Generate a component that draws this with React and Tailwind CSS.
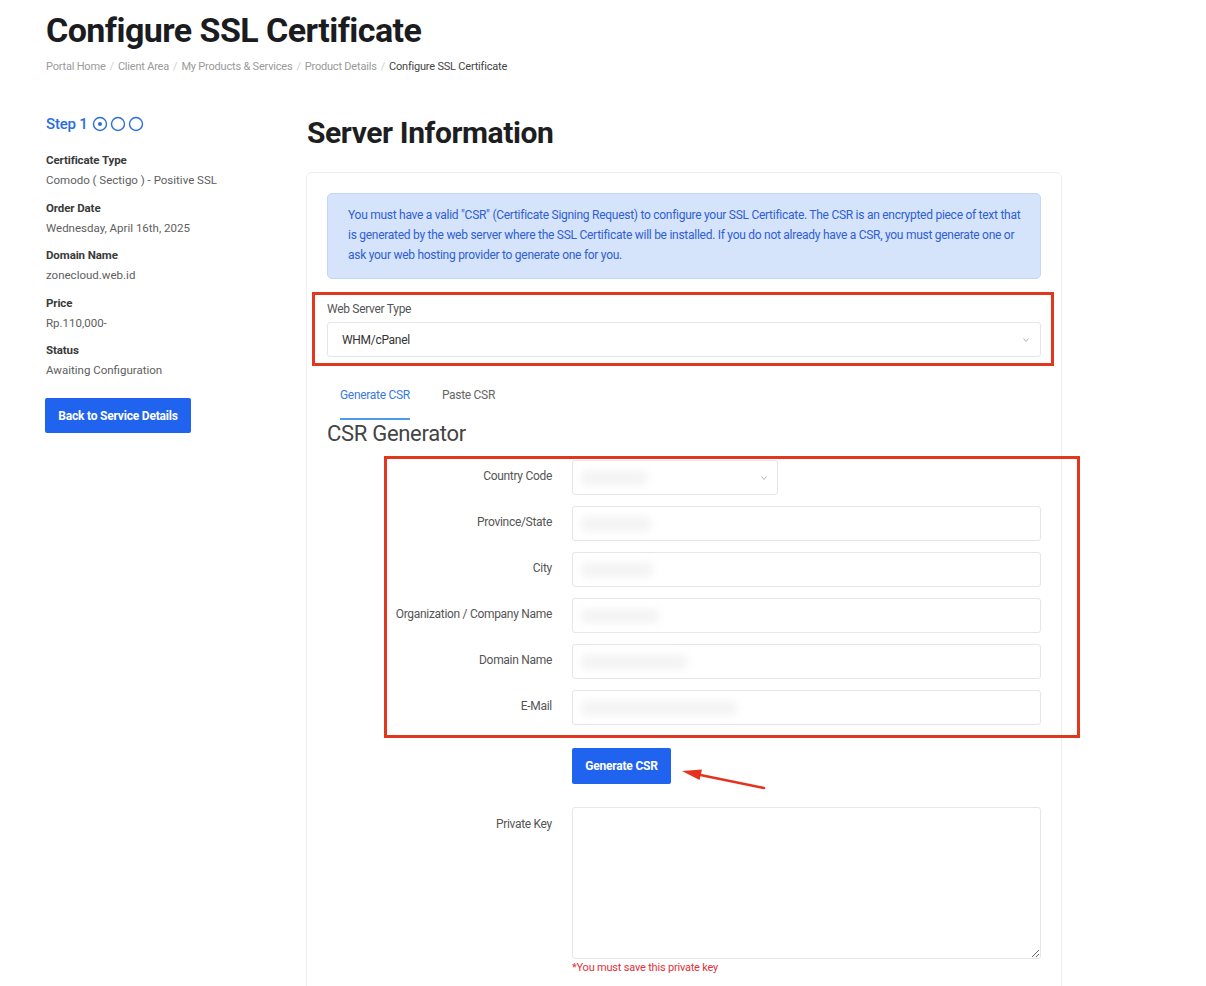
import React from "react";

const F = { fontFamily: "Roboto, 'Liberation Sans', Arial, sans-serif" };

function Blob({ w }) {
  return <div className="h-[14px] rounded bg-[#f0f0f0] blur-[4px] opacity-80" style={{ width: w }} />;
}

function Caret() {
  return (
    <svg width="6" height="4" viewBox="0 0 6 4" className="shrink-0">
      <path d="M0.5 0.5 L3 3.5 L5.5 0.5" fill="none" stroke="#b5b5b5" strokeWidth="1" />
    </svg>
  );
}

function Row({ label, children }) {
  return (
    <div className="flex items-center">
      <div className="w-[165px] text-right text-[12px] leading-[16px] tracking-[-0.3px] text-[#555] pb-[3px]">{label}</div>
      <div className="ml-[20px]">{children}</div>
    </div>
  );
}

function Input({ blob }) {
  return (
    <div className="w-[469px] h-[35px] border border-[#e3e6ea] rounded-[3px] bg-white flex items-center pl-[8px]">
      <Blob w={blob} />
    </div>
  );
}

export default function App() {
  const groups = [
    ["Certificate Type", "Comodo ( Sectigo ) - Positive SSL"],
    ["Order Date", "Wednesday, April 16th, 2025"],
    ["Domain Name", "zonecloud.web.id"],
    ["Price", "Rp.110,000-"],
    ["Status", "Awaiting Configuration"],
  ];
  return (
    <div className="min-h-screen bg-white text-[#333] pl-[46px] pt-[10px] overflow-hidden" style={F}>
      <h1 className="text-[34px] leading-[40px] font-bold text-[#1b1c1f] tracking-[-0.55px]">Configure SSL Certificate</h1>
      <div className="mt-[9px] text-[11px] leading-[16px] text-[#9a9a9a] tracking-[-0.2px] flex gap-[4px]">
        <span>Portal Home</span><span className="text-[#d0d0d0]">/</span>
        <span>Client Area</span><span className="text-[#d0d0d0]">/</span>
        <span>My Products &amp; Services</span><span className="text-[#d0d0d0]">/</span>
        <span>Product Details</span><span className="text-[#d0d0d0]">/</span>
        <span className="text-[#444]">Configure SSL Certificate</span>
      </div>

      <div className="mt-[35px] flex">
        {/* left column */}
        <div className="w-[260px] shrink-0 pt-[4px]">
          <div className="flex items-center h-[20px] text-[#2a6ddc] text-[15px] font-medium tracking-[-0.2px]">
            <span>Step 1</span>
            <svg width="56" height="16" viewBox="0 0 56 16" className="ml-[4px]">
              <circle cx="8" cy="8" r="6.5" fill="none" stroke="#2a6ddc" strokeWidth="1.4" />
              <circle cx="8" cy="8" r="2" fill="#2a6ddc" />
              <circle cx="26" cy="8" r="6.5" fill="none" stroke="#2a6ddc" strokeWidth="1.4" />
              <circle cx="44" cy="8" r="6.5" fill="none" stroke="#2a6ddc" strokeWidth="1.4" />
            </svg>
          </div>
          <div className="mt-[17px] flex flex-col gap-[9.5px]">
            {groups.map(([l, v]) => (
              <div key={l}>
                <div className="text-[11.5px] leading-[18px] font-bold text-[#3a3a3a] tracking-[-0.1px]">{l}</div>
                <div className="mt-[2px] text-[11.5px] leading-[18px] text-[#5e5e5e]">{v}</div>
              </div>
            ))}
          </div>
          <button className="mt-[19px] w-[146px] h-[35px] -ml-[1px] rounded-[2px] bg-[#1f63ef] text-white text-[12px] font-bold tracking-[-0.2px]">
            Back to Service Details
          </button>
        </div>

        {/* right column */}
        <div className="w-[756px] shrink-0">
          <h2 className="mt-[5px] ml-[1px] text-[30px] leading-[36px] font-bold text-[#1d1e21] tracking-[-0.4px]">Server Information</h2>
          <div className="mt-[21px] border border-[#eceef1] rounded-[6px] px-[20px] pt-[20px] pb-[60px]">
            <div className="border border-[#c3d6f6] rounded-[5px] bg-[#d5e3fb] px-[20px] pt-[11px] pb-[13px] text-[#2f5fd3] text-[12px] leading-[20px] tracking-[-0.27px] whitespace-nowrap">
              You must have a valid "CSR" (Certificate Signing Request) to configure your SSL Certificate. The CSR is an encrypted piece of text that<br />
              is generated by the web server where the SSL Certificate will be installed. If you do not already have a CSR, you must generate one or<br />
              ask your web hosting provider to generate one for you.
            </div>

            <div className="mt-[13px] -ml-[15px] -mr-[13px] border-[3px] border-[#e2361f] pl-[12px] pr-[10px] pt-[5px] pb-[6px]">
              <div className="text-[12px] leading-[18px] text-[#555] tracking-[-0.3px]">Web Server Type</div>
              <div className="mt-[4px] h-[35px] border border-[#e3e6ea] rounded-[3px] flex items-center justify-between pl-[14px] pr-[11px]">
                <span className="text-[12px] text-[#333] tracking-[-0.3px]">WHM/cPanel</span>
                <Caret />
              </div>
            </div>

            <div className="ml-[13px] flex gap-[32px] pt-[21px]">
              <div className="text-[12px] leading-[16px] text-[#3b7be0] tracking-[-0.3px] pb-[15px] border-b-[2px] border-[#4d9be8]">Generate CSR</div>
              <div className="text-[12px] leading-[16px] text-[#666] tracking-[-0.3px] pb-[15px]">Paste CSR</div>
            </div>
            <h3 className="mt-[1px] text-[22px] leading-[26px] text-[#444] tracking-[-0.3px]">CSR Generator</h3>

            <div className="mt-[9px] ml-[57px] -mr-[39px] border-[3px] border-[#e2361f] pt-[1px] pb-[10px] pr-[36px] flex flex-col gap-[11px]">
              <Row label="Country Code">
                <div className="w-[206px] h-[35px] border border-[#e3e6ea] rounded-[3px] flex items-center justify-between pl-[8px] pr-[10px]">
                  <Blob w={66} />
                  <Caret />
                </div>
              </Row>
              <Row label="Province/State"><Input blob={70} /></Row>
              <Row label="City"><Input blob={72} /></Row>
              <Row label="Organization / Company Name"><Input blob={78} /></Row>
              <Row label="Domain Name"><Input blob={106} /></Row>
              <Row label="E-Mail"><Input blob={156} /></Row>
            </div>

            <div className="relative mt-[10px] pl-[245px]">
              <button className="w-[99px] h-[36px] rounded-[2px] bg-[#1f63ef] text-white text-[12px] font-bold tracking-[-0.2px]">Generate CSR</button>
              <svg width="90" height="28" viewBox="0 0 90 28" className="absolute left-[353px] top-[17px]">
                <line x1="18" y1="9.5" x2="84" y2="23" stroke="#e5321f" strokeWidth="2.5" strokeLinecap="round" />
                <polygon points="2,6 22,4.4 19.5,15" fill="#e5321f" />
              </svg>
            </div>

            <div className="mt-[23px] flex">
              <div className="w-[225px] text-right pt-[8px] text-[12px] leading-[18px] text-[#555] tracking-[-0.3px]">Private Key</div>
              <div className="ml-[20px]">
                <textarea className="block w-[469px] h-[152px] border border-[#e3e6ea] rounded-[3px] bg-white" defaultValue="" />
                <div className="mt-[2px] text-[11px] leading-[14px] text-[#e2303a] tracking-[-0.2px]">*You must save this private key</div>
              </div>
            </div>
          </div>
        </div>
      </div>
    </div>
  );
}
